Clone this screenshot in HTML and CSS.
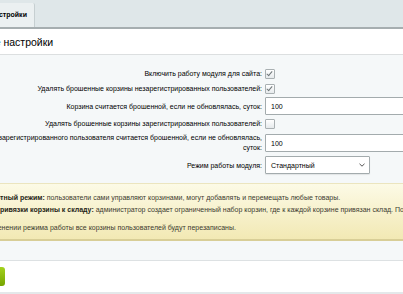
FILE: index.html
```html
<!DOCTYPE html>
<html lang="ru">
<head>
  <meta charset="UTF-8" />
  <title>Настройки модуля</title>
  <link rel="stylesheet" href="styles.css">
</head>
<body>

<div class="tabs">
  <div class="tab">Настройки</div>
</div>

<div class="head">
  <h2 class="title">Общие настройки</h2>
</div>

<div class="settings">
  <div class="form">
    <div class="lbl">Включить работу модуля для сайта:</div>
    <div class="ctl"><span class="check on"></span></div>

    <div class="lbl">Удалять брошенные корзины незарегистрированных пользователей:</div>
    <div class="ctl"><span class="check on"></span></div>

    <div class="lbl">Корзина считается брошенной, если не обновлялась, суток:</div>
    <div class="ctl"><div class="field">100</div></div>

    <div class="lbl">Удалять брошенные корзины зарегистрированных пользователей:</div>
    <div class="ctl"><span class="check"></span></div>

    <div class="lbl two">Корзина зарегистрированного пользователя считается брошенной, если не обновлялась, суток:</div>
    <div class="ctl"><div class="field">100</div></div>

    <div class="lbl">Режим работы модуля:</div>
    <div class="ctl">
      <div class="select">
        Стандартный
        <svg width="6" height="4" viewBox="0 0 6 4"><polyline points="0.5,0.8 3,3.2 5.5,0.8" fill="none" stroke="#555" stroke-width="1"/></svg>
      </div>
    </div>
  </div>

  <div class="note">
    <div class="note-in">
      <p><b>Стандартный режим:</b> пользователи сами управляют корзинами, могут добавлять и перемещать любые товары.</p>
      <p><b>Режим привязки корзины к складу:</b> администратор создает ограниченный набор корзин, где к каждой корзине привязан склад. Пользователи выбирают корзину из списка.</p>
      <p class="warn">При изменении режима работы все корзины пользователей будут перезаписаны.</p>
    </div>
  </div>

  <div class="foot-gap"></div>
</div>

<div class="buttons">
  <button class="save">Сохранить</button>
</div>

</body>
</html>
```

FILE: styles.css
```css
body {
  margin: 0;
  overflow: hidden;
  background: #fff;
  color: #000;
  font-family: "Liberation Sans", Arial, sans-serif;
  font-size: 7px;
}
.tabs {
  height: 27px;
  background: #dfe7e9;
  border-bottom: 2px solid #a6aeb0;
  display: flex;
  align-items: flex-end;
}
.tab {
  height: 24px;
  line-height: 24px;
  margin-left: -10px;
  padding: 0 7px 0 0;
  background: #ebf0f1;
  border-right: 1px solid #c6cfd1;
  border-top-right-radius: 2px;
  font-weight: bold;
}
.head {
  height: 25px;
  border-bottom: 1px solid #dcdfe0;
  display: flex;
  align-items: center;
}
.title {
  margin: 0 0 0 -34px;
  font-size: 10.5px;
  font-weight: normal;
}
.settings {
  background: #f5f8f9;
  padding-top: 12px;
}
.form {
  margin-left: -48px;
  display: grid;
  grid-template-columns: 310px 160px;
  grid-template-rows: 13px 13px 18px 13px 22px 18px;
  column-gap: 3px;
  row-gap: 2px;
}
.lbl {
  text-align: right;
  display: flex;
  align-items: center;
  justify-content: flex-end;
}
.lbl.two {
  line-height: 10px;
}
.ctl {
  display: flex;
  align-items: center;
}
.check {
  width: 8px;
  height: 8px;
  border: 1px solid #a9b0b2;
  border-radius: 1px;
  background: linear-gradient(#fff, #e6eaec);
  position: relative;
}
.check.on::after {
  content: "";
  position: absolute;
  left: 2px;
  top: 0px;
  width: 2px;
  height: 5px;
  border: solid #6f7779;
  border-width: 0 1.3px 1.3px 0;
  transform: rotate(40deg);
}
.field, .select {
  height: 16px;
  border: 1px solid #a3abad;
  border-radius: 1px;
  background: #fff;
  display: flex;
  align-items: center;
  padding-left: 5px;
}
.field {
  width: 155px;
}
.select {
  width: 94px;
  justify-content: space-between;
  padding-right: 4px;
  box-shadow: 0 1px 1px rgba(0,0,0,0.08);
}
.note {
  margin-top: 9px;
  border-top: 1px solid #ebe5bf;
  border-bottom: 2px solid #d8ce97;
  background: linear-gradient(#fcfae6, #f2e9b4);
  height: 55px;
  overflow: hidden;
}
.note-in {
  margin-left: -29px;
  padding-top: 9px;
  color: #3c3b30;
  white-space: nowrap;
}
.note p {
  margin: 0 0 3px;
  line-height: 9px;
}
.note b {
  color: #1f1e16;
}
.note p.warn {
  margin-top: 9px;
}
.foot-gap {
  height: 19px;
  border-bottom: 1px solid #dde1e3;
  background: #f5f8f9;
}
.buttons {
  height: 31px;
  border-bottom: 2px solid #e4e8ea;
  display: flex;
  align-items: center;
}
.save {
  margin-left: -55px;
  width: 60px;
  height: 19px;
  border: none;
  border-radius: 3px;
  background: linear-gradient(#a3d21d, #76a400);
  color: #fff;
  font-weight: bold;
  font-size: 8px;
}
```
